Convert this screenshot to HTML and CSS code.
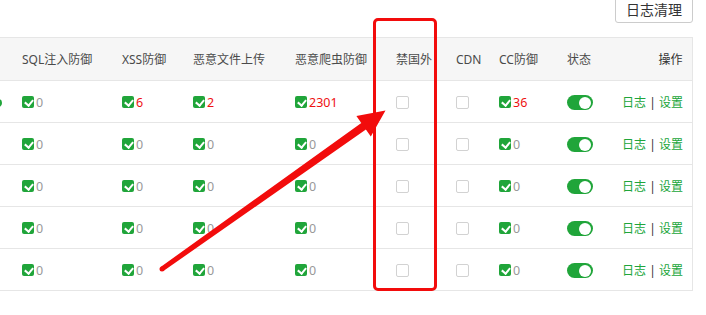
FILE: index.html
```html
<!DOCTYPE html>
<html lang="zh-CN">
<head>
  <meta charset="UTF-8" />
  <title>网站防火墙</title>
  <link rel="stylesheet" href="styles.css">
</head>
<body>
  <div class="page">
    <div class="toolbar">
      <button class="btn">日志清理</button>
    </div>

    <table class="site-table">
      <colgroup>
        <col style="width:12px">
        <col style="width:100px">
        <col style="width:71px">
        <col style="width:102px">
        <col style="width:101px">
        <col style="width:60px">
        <col style="width:43px">
        <col style="width:68px">
        <col style="width:55px">
        <col style="width:80px">
      </colgroup>
      <thead>
        <tr>
          <th></th>
          <th>SQL注入防御</th>
          <th>XSS防御</th>
          <th>恶意文件上传</th>
          <th>恶意爬虫防御</th>
          <th>禁国外</th>
          <th>CDN</th>
          <th>CC防御</th>
          <th>状态</th>
          <th class="ops">操作</th>
        </tr>
      </thead>
      <tbody>
        <tr>
          <td><span class="edge-dot"></span></td>
          <td><span class="chk on"></span><span class="num">0</span></td>
          <td><span class="chk on"></span><span class="num hit">6</span></td>
          <td><span class="chk on"></span><span class="num hit">2</span></td>
          <td><span class="chk on"></span><span class="num hit">2301</span></td>
          <td><span class="chk"></span></td>
          <td><span class="chk"></span></td>
          <td><span class="chk on"></span><span class="num hit">36</span></td>
          <td><span class="switch"></span></td>
          <td class="ops"><a href="#">日志</a> | <a href="#">设置</a></td>
        </tr>
        <tr>
          <td></td>
          <td><span class="chk on"></span><span class="num">0</span></td>
          <td><span class="chk on"></span><span class="num">0</span></td>
          <td><span class="chk on"></span><span class="num">0</span></td>
          <td><span class="chk on"></span><span class="num">0</span></td>
          <td><span class="chk"></span></td>
          <td><span class="chk"></span></td>
          <td><span class="chk on"></span><span class="num">0</span></td>
          <td><span class="switch"></span></td>
          <td class="ops"><a href="#">日志</a> | <a href="#">设置</a></td>
        </tr>
        <tr>
          <td></td>
          <td><span class="chk on"></span><span class="num">0</span></td>
          <td><span class="chk on"></span><span class="num">0</span></td>
          <td><span class="chk on"></span><span class="num">0</span></td>
          <td><span class="chk on"></span><span class="num">0</span></td>
          <td><span class="chk"></span></td>
          <td><span class="chk"></span></td>
          <td><span class="chk on"></span><span class="num">0</span></td>
          <td><span class="switch"></span></td>
          <td class="ops"><a href="#">日志</a> | <a href="#">设置</a></td>
        </tr>
        <tr>
          <td></td>
          <td><span class="chk on"></span><span class="num">0</span></td>
          <td><span class="chk on"></span><span class="num">0</span></td>
          <td><span class="chk on"></span><span class="num">0</span></td>
          <td><span class="chk on"></span><span class="num">0</span></td>
          <td><span class="chk"></span></td>
          <td><span class="chk"></span></td>
          <td><span class="chk on"></span><span class="num">0</span></td>
          <td><span class="switch"></span></td>
          <td class="ops"><a href="#">日志</a> | <a href="#">设置</a></td>
        </tr>
        <tr>
          <td></td>
          <td><span class="chk on"></span><span class="num">0</span></td>
          <td><span class="chk on"></span><span class="num">0</span></td>
          <td><span class="chk on"></span><span class="num">0</span></td>
          <td><span class="chk on"></span><span class="num">0</span></td>
          <td><span class="chk"></span></td>
          <td><span class="chk"></span></td>
          <td><span class="chk on"></span><span class="num">0</span></td>
          <td><span class="switch"></span></td>
          <td class="ops"><a href="#">日志</a> | <a href="#">设置</a></td>
        </tr>
      </tbody>
    </table>

    <!-- annotation drawn over the screenshot -->
    <div class="mark-box"></div>
    <svg class="mark-arrow" width="706" height="315" viewBox="0 0 706 315">
      <polygon fill="#f20c0c" points="160.6,273 361.3,128.9 356.4,122 385.5,116.5 370.8,142.4 365.9,135.5 163.4,277"/>
      <circle fill="#f20c0c" cx="162" cy="275" r="2.5"/>
    </svg>
  </div>
</body>
</html>
```

FILE: styles.css
```css
* {
  margin: 0;
  padding: 0;
  box-sizing: border-box;
}

body {
  background: #fff;
  font-family: "Noto Sans", "Noto Sans CJK SC", sans-serif;
  font-size: 12px;
  color: #444;
  overflow: hidden;
}

.page {
  position: relative;
  width: 706px;
  height: 315px;
}

.toolbar {
  display: flex;
  justify-content: flex-end;
  width: 693px;
  margin-top: -6px;
}

.btn {
  height: 29px;
  padding: 0 10px;
  font-family: "Noto Sans CJK SC", sans-serif;
  font-size: 14px;
  line-height: 26px;
  color: #333;
  background: #fff;
  border: 1px solid #ccc;
  border-radius: 3px;
}

.site-table {
  width: 692px;
  margin-top: 14px;
  table-layout: fixed;
  border-collapse: collapse;
  border-right: 1px solid #e6e6e6;
}

.site-table th,
.site-table td {
  padding: 0 0 0 10px;
  text-align: left;
  white-space: nowrap;
  border-top: 1px solid #e6e6e6;
  border-bottom: 1px solid #e6e6e6;
}

.site-table th {
  height: 43px;
  background: #f6f6f6;
  font-weight: normal;
  color: #4a4a4a;
}

.site-table td {
  height: 42px;
}

.site-table .ops {
  text-align: right;
  padding-right: 9px;
  color: #333;
}

.ops a {
  color: #20a53a;
  text-decoration: none;
}

.chk {
  display: inline-block;
  position: relative;
  width: 13px;
  height: 13px;
  vertical-align: middle;
  border: 1px solid #d2d2d2;
  border-radius: 2px;
  background: #fff;
}

.chk.on {
  width: 12px;
  height: 12px;
  border: none;
  background: #20a53a;
}

.chk.on::after {
  content: "";
  position: absolute;
  left: 3.5px;
  top: 2px;
  width: 4px;
  height: 6px;
  border-right: 2px solid #fff;
  border-bottom: 2px solid #fff;
  transform: rotate(40deg);
}

.num {
  margin-left: 2px;
  vertical-align: middle;
  font-size: 12.5px;
  color: #999;
}

.num.hit {
  color: #ee1111;
}

.switch {
  display: inline-block;
  position: relative;
  width: 26px;
  height: 15px;
  vertical-align: middle;
  border-radius: 8px;
  background: #20a53a;
}

.switch::after {
  content: "";
  position: absolute;
  right: 2px;
  top: 1.5px;
  width: 12px;
  height: 12px;
  border-radius: 50%;
  background: #fff;
}

.edge-dot {
  display: inline-block;
  width: 8px;
  height: 8px;
  margin-left: -16.5px;
  vertical-align: middle;
  border-radius: 50%;
  background: #20a53a;
}

.mark-box {
  position: absolute;
  left: 373px;
  top: 24px;
  width: 64px;
  height: 273px;
  border: 3px solid #f20c0c;
  border-radius: 5px;
}

.mark-arrow {
  position: absolute;
  left: 0;
  top: 0;
}
```
